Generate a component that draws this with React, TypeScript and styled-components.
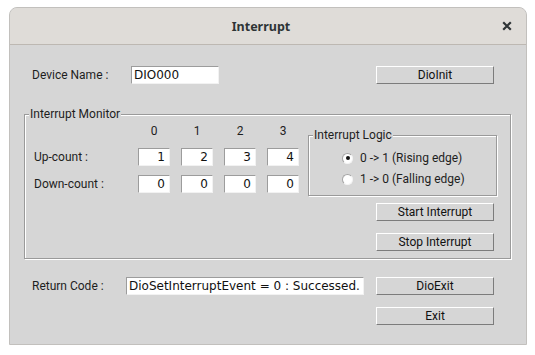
import styled, { createGlobalStyle } from "styled-components"

const GlobalStyle = createGlobalStyle`
  body {
    margin: 0;
    background: #ffffff;
    font-family: Roboto, "Noto Sans", sans-serif;
    font-size: 12px;
    color: #1e1e1e;
  }
`

const upCounts = [1, 2, 3, 4]
const downCounts = [0, 0, 0, 0]

const Window = styled.div`
  margin: 7px 0 0 9px;
  width: 518px;
  height: 338px;
  box-sizing: border-box;
  border: 1px solid #c2c0bd;
  border-radius: 8px 8px 0 0;
  overflow: hidden;
  display: flex;
  flex-direction: column;
  background: #d6d6d6;
`

const TitleBar = styled.div`
  height: 36px;
  flex: none;
  display: grid;
  grid-template-columns: 1fr auto;
  align-items: center;
  padding: 0 14px 0 10px;
  background: #dfdcd8;
  border-bottom: 1px solid #bdb8b2;
`

const Title = styled.div`
  text-align: center;
  font-family: "Noto Sans", sans-serif;
  font-size: 12.5px;
  font-weight: 700;
  color: #2e3436;
`

const CloseButton = styled.div`
  width: 10px;
  height: 10px;
  display: flex;
`

const Body = styled.div`
  flex: 1;
  display: flex;
  flex-direction: column;
  padding: 21px 15px 0 14px;
`

const Row = styled.div`
  display: flex;
  align-items: center;
  padding-left: 8px;
`

const Label = styled.span<{ $width: number }>`
  width: ${({ $width }) => $width}px;
  flex: none;
  line-height: 18px;
`

const TextBox = styled.input<{ $width: number; $right?: boolean }>`
  width: ${({ $width }) => $width}px;
  height: 18px;
  box-sizing: border-box;
  margin: 0;
  padding: ${({ $right }) => ($right ? "0 4px 0 2px" : "0 2px")};
  border: 1px solid;
  border-color: #9c9c9c #f2f2f2 #f2f2f2 #9c9c9c;
  background: #ffffff;
  font-family: "DejaVu Sans", sans-serif;
  font-size: 12px;
  color: #111;
  text-align: ${({ $right }) => ($right ? "right" : "left")};
  outline: none;
`

const Button = styled.button`
  width: 118px;
  height: 18px;
  box-sizing: border-box;
  margin: 0;
  padding: 0;
  border: 1px solid;
  border-color: #ffffff #7c7c7c #7c7c7c #ffffff;
  background: #d6d6d6;
  font: inherit;
  line-height: 16px;
  color: #111;
`

const PushRight = styled.div`
  margin-left: auto;
  margin-right: 17px;
  display: flex;
  flex-direction: column;
  gap: 12px;
`

const Group = styled.fieldset`
  margin: 22px 0 0;
  padding: 0;
  min-width: 0;
  border: 1px solid #9a9a9a;
  box-shadow: inset 1px 1px 0 #ffffff, 1px 1px 0 #ffffff;
`

const Legend = styled.legend`
  margin-left: 4px;
  padding: 0 1px;
  line-height: 16px;
  background: #d6d6d6;
`

const MonitorInner = styled.div`
  display: flex;
  align-items: flex-start;
  padding: 1px 0 7px 9px;
`

const CountGrid = styled.div`
  display: grid;
  grid-template-columns: 93px repeat(4, 32px);
  grid-template-rows: 16px 18px 18px;
  column-gap: 11px;
  row-gap: 9px;
  align-items: center;
`

const Header = styled.span`
  text-align: center;
  line-height: 16px;
`

const RightColumn = styled.div`
  margin-left: 9px;
  width: 189px;
  display: flex;
  flex-direction: column;
  margin-top: 4px;
`

const LogicGroup = styled(Group)`
  margin: 0;
`

const LogicInner = styled.div`
  display: flex;
  flex-direction: column;
  gap: 5px;
  padding: 7px 0 8px 33px;
`

const RadioRow = styled.label`
  display: flex;
  align-items: center;
  gap: 7px;
  line-height: 16px;
`

const RadioMark = styled.span<{ $checked?: boolean }>`
  width: 11px;
  height: 11px;
  box-sizing: border-box;
  border-radius: 50%;
  border: 1px solid;
  border-color: #a4a4a4 #f4f4f4 #f4f4f4 #a4a4a4;
  background: #ffffff;
  display: flex;
  align-items: center;
  justify-content: center;

  &::after {
    content: "";
    width: 4px;
    height: 4px;
    border-radius: 50%;
    background: ${({ $checked }) => ($checked ? "#111" : "transparent")};
  }
`

const ButtonStack = styled.div`
  align-self: flex-end;
  margin: 7px 3px 0 0;
  display: flex;
  flex-direction: column;
  gap: 12px;
`

const BottomRow = styled.div`
  display: flex;
  align-items: flex-start;
  padding-left: 8px;
  margin-top: 18px;
`

export default function App() {
  return (
    <>
      <GlobalStyle />
      <Window>
        <TitleBar>
          <Title>Interrupt</Title>
          <CloseButton>
            <svg width="10" height="10" viewBox="0 0 10 10">
              <path d="M1.2 1.2 L8.8 8.8 M8.8 1.2 L1.2 8.8" stroke="#2e3436" strokeWidth="2.2" />
            </svg>
          </CloseButton>
        </TitleBar>
        <Body>
          <Row>
            <Label $width={99}>Device Name :</Label>
            <TextBox $width={88} readOnly value="DIO000" />
            <PushRight>
              <Button>DioInit</Button>
            </PushRight>
          </Row>

          <Group>
            <Legend>Interrupt Monitor</Legend>
            <MonitorInner>
              <CountGrid>
                <span />
                {[0, 1, 2, 3].map((n) => (
                  <Header key={n}>{n}</Header>
                ))}
                <Label $width={93}>Up-count :</Label>
                {upCounts.map((v, i) => (
                  <TextBox key={i} $width={32} $right readOnly value={v} />
                ))}
                <Label $width={93}>Down-count :</Label>
                {downCounts.map((v, i) => (
                  <TextBox key={i} $width={32} $right readOnly value={v} />
                ))}
              </CountGrid>
              <RightColumn>
                <LogicGroup>
                  <Legend>Interrupt Logic</Legend>
                  <LogicInner>
                    <RadioRow>
                      <RadioMark $checked />
                      0 -&gt; 1 (Rising edge)
                    </RadioRow>
                    <RadioRow>
                      <RadioMark />
                      1 -&gt; 0 (Falling edge)
                    </RadioRow>
                  </LogicInner>
                </LogicGroup>
                <ButtonStack>
                  <Button>Start Interrupt</Button>
                  <Button>Stop Interrupt</Button>
                </ButtonStack>
              </RightColumn>
            </MonitorInner>
          </Group>

          <BottomRow>
            <Label $width={94}>Return Code :</Label>
            <TextBox $width={238} readOnly value="DioSetInterruptEvent = 0 : Successed." />
            <PushRight>
              <Button>DioExit</Button>
              <Button>Exit</Button>
            </PushRight>
          </BottomRow>
        </Body>
      </Window>
    </>
  )
}
